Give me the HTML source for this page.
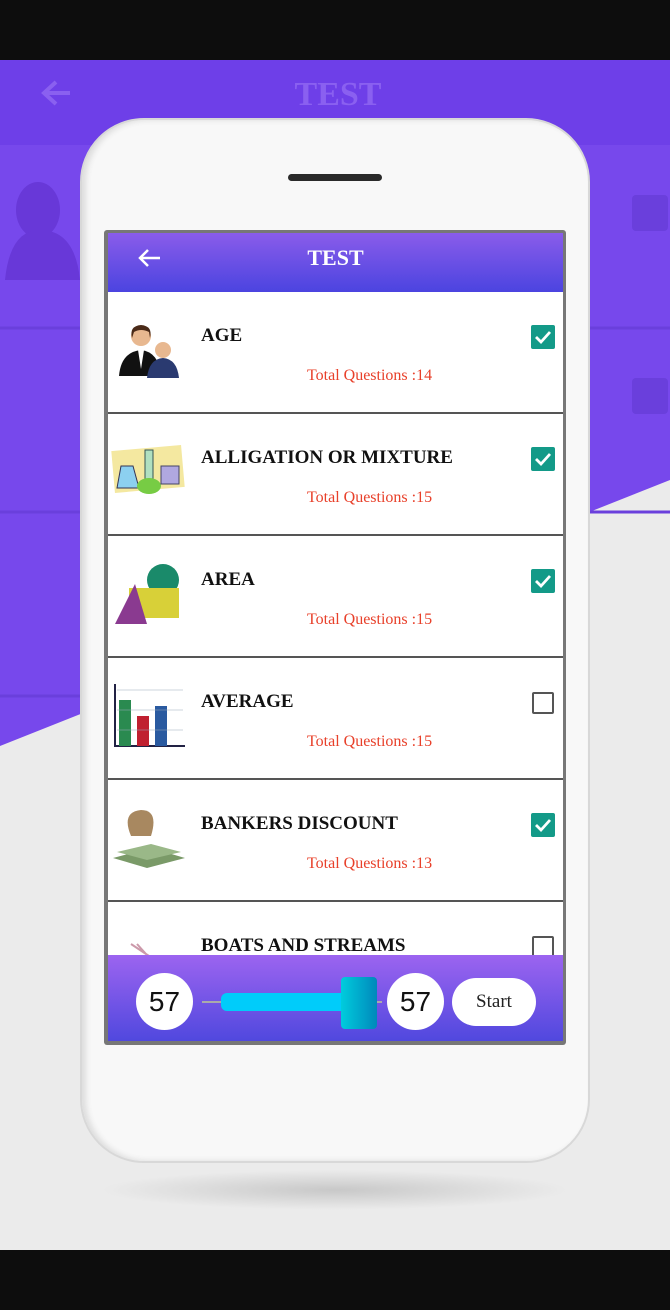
<!DOCTYPE html>
<html><head><style>
*{margin:0;padding:0;box-sizing:border-box}
body{width:670px;height:1310px;position:relative;overflow:hidden;background:#ebebeb;font-family:"Liberation Serif",serif}
.abs{position:absolute}
</style></head><body>
<div class="abs" style="left:0;top:0;width:670px;height:60px;background:#0d0d0d"></div>
<div class="abs" style="left:0;top:1250px;width:670px;height:60px;background:#0d0d0d"></div>
<svg class="abs" style="left:0;top:60px" width="670" height="700">
<polygon points="0,0 670,0 670,420 0,686" fill="#7748ec"/>
<rect x="0" y="0" width="670" height="85" fill="#6e3fe8"/>
<line x1="0" y1="268" x2="670" y2="268" stroke="#6a3fdc" stroke-width="3"/>
<line x1="0" y1="452" x2="670" y2="452" stroke="#6a3fdc" stroke-width="3"/>
<line x1="0" y1="636" x2="200" y2="636" stroke="#6a3fdc" stroke-width="3"/>
<path d="M70 33 L45 33 M56 22 L44 33 L56 44" stroke="#8a60f0" stroke-width="4" fill="none"/>
<text x="338" y="45" text-anchor="middle" font-family="Liberation Serif" font-weight="bold" font-size="34" fill="#8a60f0">TEST</text>
<rect x="632" y="135" width="36" height="36" rx="4" fill="#6a3fdc"/>
<rect x="632" y="318" width="36" height="36" rx="4" fill="#6a3fdc"/>
<ellipse cx="38" cy="150" rx="22" ry="28" fill="#6838d8"/>
<path d="M5 220 Q10 170 40 170 Q75 170 80 220Z" fill="#6838d8"/>
</svg>
<div class="abs" style="left:100px;top:1170px;width:470px;height:40px;border-radius:50%;background:radial-gradient(ellipse,#c8c8c8,rgba(235,235,235,0) 70%)"></div>
<div class="abs" style="left:80px;top:118px;width:510px;height:1045px;border-radius:64px;background:#f8f8f8;border:2px solid #d8d8d8;box-shadow:inset 4px 0 6px #ddd"></div>
<div class="abs" style="left:288px;top:174px;width:94px;height:7px;border-radius:4px;background:#2a2a2a"></div>
<div class="abs" style="left:104px;top:230px;width:462px;height:815px;background:#777;border-radius:3px"></div>
<div class="abs" style="left:108px;top:233px;width:455px;height:808px;background:#fff;overflow:hidden">
 <div class="abs" style="left:0;top:0;width:455px;height:59px;background:linear-gradient(#8a5cea,#4b44e0)"></div>
 <svg class="abs" style="left:28px;top:14px" width="30" height="22"><path d="M24 11 L4 11 M12 3 L4 11 L12 19" stroke="#fff" stroke-width="2.5" fill="none"/></svg>
 <div class="abs" style="left:0;top:12px;width:455px;text-align:center;color:#fff;font-weight:bold;font-size:22px">TEST</div>
 <div id="rows"></div>
 <div class="abs" style="left:0;top:722px;width:455px;height:86px;background:linear-gradient(#9c64f0,#5048de)"></div>
 <div class="abs" style="left:28px;top:740px;width:57px;height:57px;border-radius:50%;background:#fff;text-align:center;line-height:57px;font-size:28px;font-family:'Liberation Sans',sans-serif;color:#111">57</div>
 <div class="abs" style="left:94px;top:768px;width:180px;height:2px;background:#aaa"></div>
 <div class="abs" style="left:113px;top:760px;width:150px;height:18px;border-radius:6px;background:#00ccfa"></div>
 <div class="abs" style="left:233px;top:744px;width:36px;height:52px;border-radius:4px;background:linear-gradient(90deg,#0cd,#08b)"></div>
 <div class="abs" style="left:279px;top:740px;width:57px;height:57px;border-radius:50%;background:#fff;text-align:center;line-height:57px;font-size:28px;font-family:'Liberation Sans',sans-serif;color:#111">57</div>
 <div class="abs" style="left:344px;top:745px;width:84px;height:48px;border-radius:24px;background:#fff;text-align:center;line-height:48px;font-size:19px;color:#222">Start</div>
</div>
<script>
var d=[["AGE",14,1],["ALLIGATION OR MIXTURE",15,1],["AREA",15,1],["AVERAGE",15,0],["BANKERS DISCOUNT",13,1],["BOATS AND STREAMS",0,0]];
var icons=[
'<circle cx="30" cy="22" r="10" fill="#e8b890"/><path d="M30 11 Q18 12 21 24 L23 18 Q30 14 38 18 L39 24 Q42 12 30 11Z" fill="#4a2a18"/><path d="M8 62 Q10 38 30 36 Q48 38 50 62Z" fill="#111"/><path d="M27 36 L30 55 L33 36Z" fill="#fff"/><circle cx="52" cy="36" r="8" fill="#e8b890"/><path d="M36 64 Q38 45 52 44 Q66 45 68 64Z" fill="#2a3a70"/>',
'<rect x="2" y="12" width="70" height="42" fill="#f4e8a0" transform="rotate(-5 37 33)"/><path d="M10 30 L6 52 L28 52 L22 30Z" fill="#8cd0f0" stroke="#335" /><rect x="34" y="14" width="8" height="30" fill="#b0e0c0" stroke="#355"/><ellipse cx="38" cy="50" rx="12" ry="8" fill="#7c4"/><rect x="50" y="30" width="18" height="18" fill="#b0a8e0" stroke="#446"/>',
'<circle cx="52" cy="22" r="16" fill="#1a8a6a"/><rect x="18" y="30" width="50" height="30" fill="#d8d038"/><path d="M4 66 L24 26 L36 66Z" fill="#8a3a90"/>',
'<path d="M4 4 L4 66 L74 66" stroke="#224" stroke-width="2" fill="none"/><rect x="8" y="20" width="12" height="46" fill="#2a8a50"/><rect x="26" y="36" width="12" height="30" fill="#c02030"/><rect x="44" y="26" width="12" height="40" fill="#2a5aa0"/><path d="M6 10 H72 M6 30 H72 M6 50 H72" stroke="#9ab" stroke-width="0.6"/>',
'<path d="M20 34 Q10 10 30 8 Q48 8 40 34Z" fill="#a88860"/><path d="M2 56 L40 46 L74 56 L36 66Z" fill="#7a9a68"/><path d="M6 50 L40 42 L70 50 L36 58Z" fill="#9ab888"/>',
'<path d="M20 20 L50 40 M26 20 L44 40" stroke="#c9a" stroke-width="2"/>'];
var h='';
d.forEach(function(r,i){var y=59+i*122;
h+='<div class="abs" style="left:0;top:'+y+'px;width:455px;height:122px;border-bottom:2px solid #555"></div>';
h+='<svg class="abs" style="left:3px;top:'+(y+22)+'px" width="78" height="70">'+icons[i]+'</svg>';
h+='<div class="abs" style="left:93px;top:'+(y+33)+'px;font-weight:bold;font-size:19px;color:#111">'+r[0]+'</div>';
if(r[1])h+='<div class="abs" style="left:199px;top:'+(y+75)+'px;font-size:16px;color:#e8402a">Total Questions :'+r[1]+'</div>';
h+= r[2]?'<svg class="abs" style="left:423px;top:'+(y+33)+'px" width="24" height="24"><rect width="24" height="24" rx="2" fill="#139a88"/><path d="M5 12 L10 17 L19 7" stroke="#fff" stroke-width="2.8" fill="none"/></svg>'
:'<div class="abs" style="left:424px;top:'+(y+34)+'px;width:22px;height:22px;border:2px solid #555;border-radius:2px"></div>';
});
document.getElementById('rows').innerHTML=h;
</script>
</body></html>
